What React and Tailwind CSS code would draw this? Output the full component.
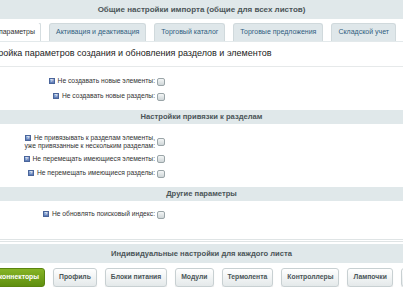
import React from 'react';

const font = { fontFamily: '"Liberation Sans", Arial, sans-serif' };

const Help = () => (
  <span className="inline-flex items-center justify-center w-[6px] h-[6px] mr-[3px] bg-gradient-to-b from-[#9cb3dc] to-[#5a78b4] border border-[#4a659a] text-[4px] leading-none text-white font-bold align-middle">
    ?
  </span>
);

const Check = () => (
  <span className="inline-block w-[8px] h-[8px] rounded-[2px] border border-[#9aa5a8] bg-gradient-to-b from-[#f4f6f6] to-[#cfd6d8]" />
);

const Row = ({ children, className = '' }) => (
  <div className={`grid grid-cols-[157px_1fr] items-center ${className}`}>
    <div className="text-right text-[6.7px] leading-[8.5px] text-[#333] pr-[2px]">{children}</div>
    <div className="flex items-center">
      <Check />
    </div>
  </div>
);

const SectionHead = ({ children }) => (
  <div className="h-[14px] bg-[#e0e8ea] flex items-center justify-center text-[7.6px] font-bold text-[#4b5558]">
    {children}
  </div>
);

const tabs = ['Активация и деактивация', 'Торговый каталог', 'Торговые предложения', 'Складской учет'];
const buttons = ['Профиль', 'Блоки питания', 'Модули', 'Термолента', 'Контроллеры', 'Лампочки', 'Светодиоды'];

export default function App() {
  return (
    <div className="w-[403px] h-[294px] overflow-hidden bg-white" style={font}>
      <div className="h-[19px] bg-[#e0e8ea] flex items-center justify-center text-[8px] font-bold text-[#4b5558]">
        Общие настройки импорта (общие для всех листов)
      </div>

      {/* tabs */}
      <div className="flex items-end gap-[8px] mt-[4px] h-[19px] overflow-hidden border-b border-[#e3e9eb]">
        <div className="w-[41px] shrink-0 flex justify-end overflow-hidden">
          <div className="h-[19px] pl-[7px] pr-[5px] bg-white border border-b-0 border-[#d5dde0] rounded-t-[3px] flex items-center text-[7px] text-[#333] whitespace-nowrap">
            Основные параметры
          </div>
        </div>
        {tabs.map((t) => (
          <div
            key={t}
            className="h-[18px] px-[6px] bg-[#dfe7ea] border border-b-0 border-[#d0d9dc] rounded-t-[3px] flex items-center text-[7px] text-[#2f5e80] whitespace-nowrap"
          >
            {t}
          </div>
        ))}
      </div>

      <div className="h-[25px] flex items-center border-b border-[#e6e9ea] overflow-hidden">
        <div className="-ml-[22px] whitespace-nowrap text-[9px] text-[#222]">
          Настройка параметров создания и обновления разделов и элементов
        </div>
      </div>

      <div className="pt-[7px] pb-[6px]">
        <Row className="h-[15px]"><Help />Не создавать новые элементы:</Row>
        <Row className="h-[15px]"><Help />Не создавать новые разделы:</Row>
      </div>

      <SectionHead>Настройки привязки к разделам</SectionHead>

      <div className="pt-[8px] pb-[6px]">
        <Row className="h-[20px]"><Help />Не привязывать к разделам элементы,<br />уже привязанные к нескольким разделам:</Row>
        <Row className="h-[14px]"><Help />Не перемещать имеющиеся элементы:</Row>
        <Row className="h-[15px]"><Help />Не перемещать имеющиеся разделы:</Row>
      </div>

      <SectionHead>Другие параметры</SectionHead>

      <div className="pt-[6px]">
        <Row className="h-[15px]"><Help />Не обновлять поисковый индекс:</Row>
      </div>

      <div className="mt-[17px] border-t border-[#dfe4e5] h-[3px] border-b" />

      <div className="mt-[2px] h-[19px] bg-[#e0e8ea] flex items-center justify-center text-[7.6px] font-bold text-[#4b5558]">
        Индивидуальные настройки для каждого листа
      </div>

      <div className="flex items-center gap-[8px] mt-[5px] overflow-hidden whitespace-nowrap">
        <div className="w-[45px] shrink-0 flex justify-end overflow-hidden">
          <div className="h-[19px] px-[5px] rounded-[3px] bg-gradient-to-b from-[#86b425] to-[#5f8f0e] border border-[#5a840f] flex items-center text-[6.8px] font-bold text-white">
            Светодиодные коннекторы
          </div>
        </div>
        {buttons.map((b) => (
          <div
            key={b}
            className="h-[19px] px-[5px] shrink-0 rounded-[3px] bg-gradient-to-b from-white to-[#e4e9ea] border border-[#c8d0d2] shadow-[0_1px_1px_rgba(0,0,0,0.1)] flex items-center text-[6.8px] font-bold text-[#4a5558]"
          >
            {b}
          </div>
        ))}
      </div>
    </div>
  );
}
